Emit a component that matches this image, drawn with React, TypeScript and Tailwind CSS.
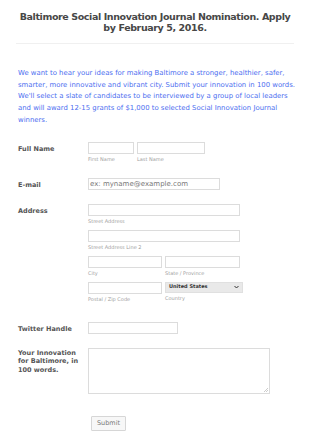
import React from "react";

const inputCls = "block h-[12px] border border-[#dcdcdc] bg-white";
const subCls = "text-[5px] leading-[6px] text-[#a0a0a0] mt-[2px] whitespace-nowrap";
const labelCls = "w-[70px] shrink-0 text-[6.5px] leading-[8.5px] font-bold text-[#555]";

export default function App() {
  return (
    <div className="w-[310px] h-[442px] bg-white" style={{ fontFamily: '"DejaVu Sans", Verdana, sans-serif' }}>
      <div className="pt-[11px] px-[16px]">
        <h1 className="text-center text-[9.5px] leading-[11px] font-bold tracking-[-0.4px] text-[#474747]">
          Baltimore Social Innovation Journal Nomination. Apply by February 5, 2016.
        </h1>
        <div className="mt-[10px] h-px bg-[#f0f0f0]" />
      </div>
      <p className="mt-[24px] pl-[18px] pr-[12px] text-[6.9px] leading-[11.7px] text-[#4c6ef0]">
        We want to hear your ideas for making Baltimore a stronger, healthier, safer, smarter, more innovative and vibrant city. Submit your innovation in 100 words. We'll select a slate of candidates to be interviewed by a group of local leaders and will award 12-15 grants of $1,000 to selected Social Innovation Journal winners.
      </p>

      <div className="pl-[18px]">
        {/* Full Name */}
        <div className="mt-[15px] flex">
          <div className={labelCls + " pt-[3px]"}>Full Name</div>
          <div className="flex gap-[3px]">
            <div>
              <div className={inputCls + " w-[46px]"} />
              <div className={subCls}>First Name</div>
            </div>
            <div>
              <div className={inputCls + " w-[68px]"} />
              <div className={subCls}>Last Name</div>
            </div>
          </div>
        </div>

        {/* Email */}
        <div className="mt-[16px] flex">
          <div className={labelCls + " pt-[3px]"}>E-mail</div>
          <div className={inputCls + " w-[132px] px-[1px] text-[7px] leading-[10px] text-[#777] whitespace-nowrap"}>ex: myname@example.com</div>
        </div>

        {/* Address */}
        <div className="mt-[14px] flex">
          <div className={labelCls + " pt-[3px]"}>Address</div>
          <div className="w-[155px]">
            <div className={inputCls + " w-[152px]"} />
            <div className={subCls}>Street Address</div>
            <div className={inputCls + " w-[152px] mt-[6px]"} />
            <div className={subCls}>Street Address Line 2</div>
            <div className="mt-[6px] flex gap-[3px]">
              <div>
                <div className={inputCls + " w-[74px]"} />
                <div className={subCls}>City</div>
              </div>
              <div>
                <div className={inputCls + " w-[75px]"} />
                <div className={subCls}>State / Province</div>
              </div>
            </div>
            <div className="mt-[6px] flex gap-[3px]">
              <div>
                <div className={inputCls + " w-[74px]"} />
                <div className={subCls}>Postal / Zip Code</div>
              </div>
              <div>
                <div className="h-[11px] w-[78px] bg-[#e9e9e9] border border-[#e0e0e0] flex items-center justify-between pl-[3px] pr-[3px]">
                  <span className="text-[5px] font-bold text-[#333]">United States</span>
                  <svg width="5" height="4" viewBox="0 0 10 8"><path d="M1 2 L5 6 L9 2" stroke="#333" strokeWidth="2" fill="none" /></svg>
                </div>
                <div className={subCls}>Country</div>
              </div>
            </div>
          </div>
        </div>

        {/* Twitter */}
        <div className="mt-[20px] flex">
          <div className={labelCls + " pt-[3px]"}>Twitter Handle</div>
          <div className={inputCls + " w-[90px]"} />
        </div>

        {/* Innovation */}
        <div className="mt-[14px] flex">
          <div className={labelCls + " pt-[1px]"}>Your Innovation for Baltimore, in 100 words.</div>
          <div className="relative w-[182px] h-[46px] border border-[#dcdcdc] bg-white">
            <svg className="absolute right-[1px] bottom-[1px]" width="4" height="4" viewBox="0 0 4 4"><path d="M4 0 L0 4 M4 2 L2 4" stroke="#aaa" strokeWidth="0.6" /></svg>
          </div>
        </div>

        <div className="mt-[14px] pl-[73px]">
          <button className="h-[15px] w-[35px] border border-[#d6d6d6] bg-[#f7f7f7] rounded-[1px] text-[6.5px] text-[#777]">Submit</button>
        </div>
      </div>
    </div>
  );
}
